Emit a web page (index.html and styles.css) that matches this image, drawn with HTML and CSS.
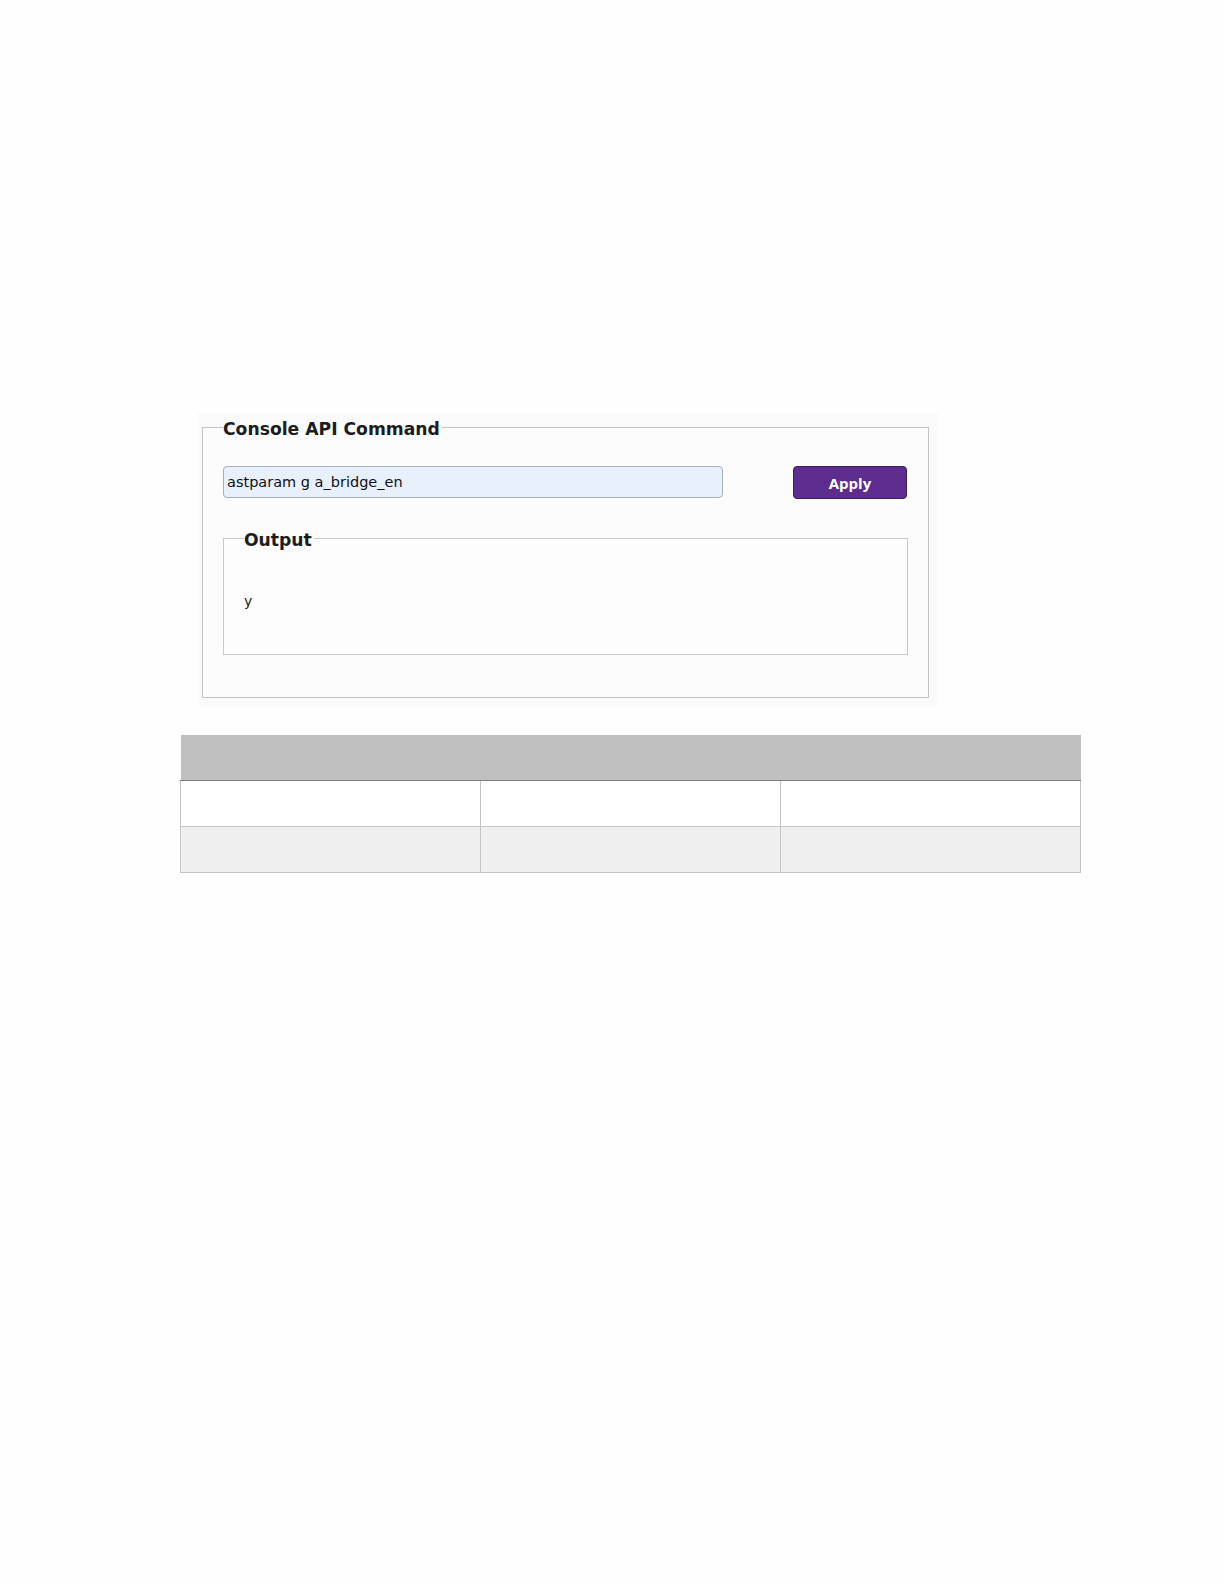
FILE: index.html
```html
<!DOCTYPE html>
<html>
<head>
<meta charset="utf-8">
<link rel="stylesheet" href="styles.css">
</head>
<body>
<div class="page">
  <div class="panel">
    <fieldset class="box">
      <legend class="box-title">Console API Command</legend>
      <div class="cmd-row">
        <input class="cmd-input" type="text" value="astparam g a_bridge_en">
        <button class="apply-btn" type="button">Apply</button>
      </div>
      <fieldset class="out-box">
        <legend class="box-title">Output</legend>
        <div class="out-text">y</div>
      </fieldset>
    </fieldset>
  </div>
  <table class="grid">
    <thead>
      <tr><th></th><th></th><th></th></tr>
    </thead>
    <tbody>
      <tr><td></td><td></td><td></td></tr>
      <tr class="alt"><td></td><td></td><td></td></tr>
    </tbody>
  </table>
</div>
</body>
</html>
```
FILE: styles.css
```css
html, body {
  margin: 0;
  background: #fefefe;
}
.page {
  padding-top: 413px;
  font-family: "DejaVu Sans", Verdana, sans-serif;
  color: #1a1a1a;
}
.panel {
  margin-left: 198px;
  width: 732px;
  background: #fafafa;
  padding: 1px 4px 8px 4px;
}
.box {
  box-sizing: border-box;
  width: 727px;
  margin: 0;
  border: 1px solid #c4c4c4;
  padding: 26px 20px 42px 20px;
  background: #fcfcfc;
}
.box-title {
  padding: 4px 2px 0 0;
  font-size: 17.2px;
  line-height: 22px;
  font-weight: bold;
  color: #1c1c1c;
}
.cmd-row {
  display: flex;
  align-items: flex-start;
  gap: 70px;
}
.cmd-input {
  box-sizing: border-box;
  width: 500px;
  height: 32px;
  margin: 0;
  padding: 0 3px;
  border: 1px solid #a9adb5;
  border-radius: 4px;
  background: #e8f0fe;
  font-family: "DejaVu Sans", Verdana, sans-serif;
  font-size: 14.5px;
  color: #111;
}
.apply-btn {
  box-sizing: border-box;
  width: 114px;
  height: 33px;
  margin: 0;
  border: 1px solid #3d1d66;
  border-radius: 4px;
  background: #5c2c8e;
  color: #fff;
  font-family: "Open Sans", "Liberation Sans", sans-serif;
  font-weight: bold;
  font-size: 15px;
}
.out-box {
  box-sizing: border-box;
  margin: 26px 0 0 0;
  border: 1px solid #c8c8c8;
  padding: 42px 20px 45px 20px;
  background: #fdfdfd;
}
.out-text {
  font-size: 14px;
  line-height: 16px;
  color: #222;
}
.grid {
  margin: 29px 0 0 180px;
  width: 901px;
  border-collapse: collapse;
  table-layout: fixed;
}
.grid th {
  height: 45px;
  padding: 0;
  background: #bfc0bf;
  border-bottom: 1px solid #7a7a7a;
}
.grid td {
  height: 45px;
  padding: 0;
  background: #ffffff;
  border: 1px solid #c4c4c4;
}
.grid tr.alt td {
  background: #efefef;
}
```
